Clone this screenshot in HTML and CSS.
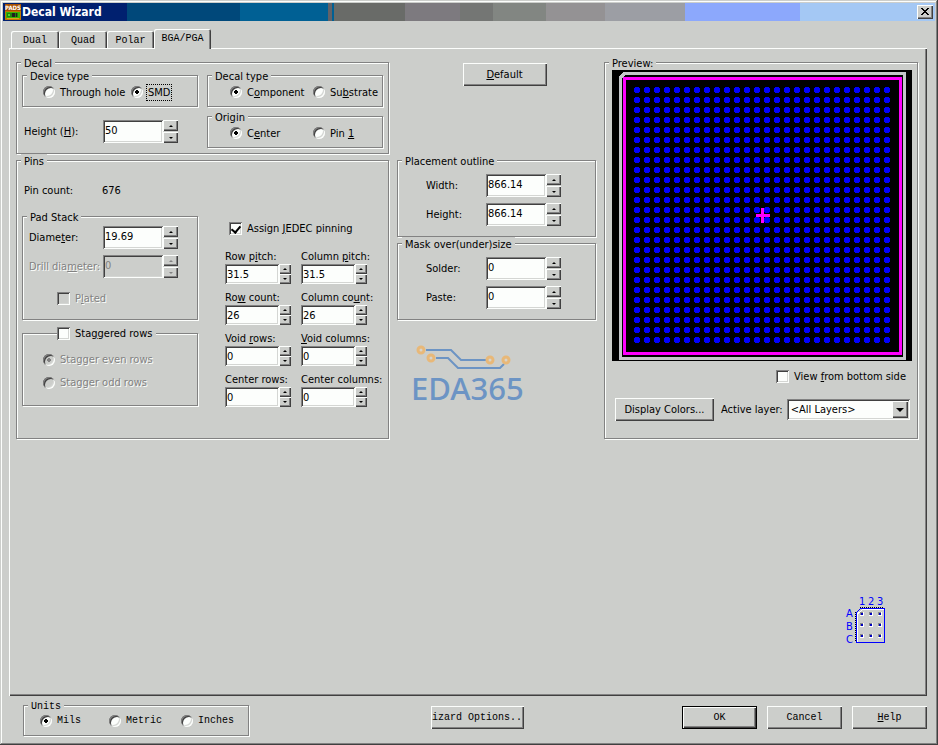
FILE: index.html
```html
<!DOCTYPE html>
<html lang="en">
<head>
<meta charset="utf-8">
<title>Decal Wizard</title>
<link rel="stylesheet" href="styles.css">
</head>
<body>
<main class="window">
  <header class="titlebar">
    <svg class="app-icon" width="16" height="16" viewBox="0 0 16 16" aria-hidden="true" shape-rendering="crispEdges">
      <rect width="16" height="16" fill="#c07800"/>
      <rect width="16" height="7" fill="#a85000"/>
      <text x="0" y="6" font-family="DejaVu Sans Condensed" font-size="6" font-weight="bold" fill="#fff">PADS</text>
      <rect x="1" y="8" width="14" height="6" fill="#38b800"/>
      <rect x="2" y="9" width="11" height="4" fill="#208010"/>
      <rect x="3" y="10" width="2" height="2" fill="#50e020"/>
      <rect x="7" y="9" width="3" height="4" fill="#202020"/>
      <rect x="11" y="9" width="1" height="4" fill="#202020"/>
      <rect x="2" y="14" width="12" height="1" fill="#e0a020"/>
    </svg>
    <h1 class="title">Decal Wizard</h1>
    <button class="close" type="button" aria-label="Close">
      <svg width="8" height="7" viewBox="0 0 8 7" aria-hidden="true" shape-rendering="crispEdges"><path d="M0 0h2v1h1v1h2v-1h1v-1h2v1h-1v1h-1v1h-1v1h1v1h1v1h1v1h-2v-1h-1v-1h-2v1h-1v1h-2v-1h1v-1h1v-1h1v-1h-1v-1h-1v-1h-1z"/></svg>
    </button>
  </header>

  <nav class="tabs" role="tablist">
    <button class="tab tab-dual" role="tab" type="button">Dual</button>
    <button class="tab tab-quad" role="tab" type="button">Quad</button>
    <button class="tab tab-polar" role="tab" type="button">Polar</button>
    <button class="tab tab-bga active" role="tab" type="button" aria-selected="true">BGA/PGA</button>
  </nav>

  <section class="page">
    <div class="columns">
      <fieldset class="group decal">
        <legend>Decal</legend>
        <fieldset class="group device">
          <legend>Device type</legend>
          <div class="radios wide">
            <label class="choice"><input type="radio" name="device"><span>Through hole</span></label>
            <label class="choice"><input type="radio" name="device" checked><span class="focused">SMD</span></label>
          </div>
        </fieldset>
        <fieldset class="group">
          <legend>Decal type</legend>
          <div class="radios">
            <label class="choice"><input type="radio" name="type" checked><span>C<u>o</u>mponent</span></label>
            <label class="choice"><input type="radio" name="type"><span>Su<u>b</u>strate</span></label>
          </div>
        </fieldset>
        <div class="field height-field">
          <label for="height">Height (<u>H</u>):</label>
          <span class="spin"><input id="height" type="text" value="50"><span class="arrows"><button type="button" class="up" aria-label="Increase"></button><button type="button" class="down" aria-label="Decrease"></button></span></span>
        </div>
        <fieldset class="group">
          <legend>Origin</legend>
          <div class="radios">
            <label class="choice"><input type="radio" name="origin" checked><span>C<u>e</u>nter</span></label>
            <label class="choice"><input type="radio" name="origin"><span>Pin <u>1</u></span></label>
          </div>
        </fieldset>
      </fieldset>

      <div class="default-cell"><button class="btn" type="button"><u>D</u>efault</button></div>

      <fieldset class="group pins">
        <legend>Pins</legend>
        <div class="pins-left">
          <div class="field pin-count"><span>Pin count:</span><output>676</output></div>
          <fieldset class="group pad-stack">
            <legend>Pad Stack</legend>
            <div class="field">
              <label for="diameter">Diame<u>t</u>er:</label>
              <span class="spin"><input id="diameter" type="text" value="19.69"><span class="arrows"><button type="button" class="up" aria-label="Increase"></button><button type="button" class="down" aria-label="Decrease"></button></span></span>
            </div>
            <div class="field disabled">
              <label for="drill">Drill dia<u>m</u>eter:</label>
              <span class="spin"><input id="drill" type="text" value="0" disabled><span class="arrows"><button type="button" class="up" aria-label="Increase" disabled></button><button type="button" class="down" aria-label="Decrease" disabled></button></span></span>
            </div>
            <label class="choice check plated disabled"><input type="checkbox" disabled><span>P<u>l</u>ated</span></label>
          </fieldset>
          <fieldset class="group staggered">
            <legend><label class="choice check"><input type="checkbox"><span>Sta<u>g</u>gered rows</span></label></legend>
            <label class="choice disabled"><input type="radio" name="stagger" checked disabled><span>Stagger even rows</span></label>
            <label class="choice disabled"><input type="radio" name="stagger" disabled><span>Stagger odd rows</span></label>
          </fieldset>
        </div>
        <div class="pins-right">
          <label class="choice check jedec"><input type="checkbox" checked><span>Assign <u>J</u>EDEC pinning</span></label>
          <div class="matrix">
            <div class="cell"><label for="rp">Row p<u>i</u>tch:</label><span class="spin small"><input id="rp" type="text" value="31.5"><span class="arrows"><button type="button" class="up" aria-label="Increase"></button><button type="button" class="down" aria-label="Decrease"></button></span></span></div>
            <div class="cell"><label for="cp">Column <u>p</u>itch:</label><span class="spin small"><input id="cp" type="text" value="31.5"><span class="arrows"><button type="button" class="up" aria-label="Increase"></button><button type="button" class="down" aria-label="Decrease"></button></span></span></div>
            <div class="cell"><label for="rc">Ro<u>w</u> count:</label><span class="spin small"><input id="rc" type="text" value="26"><span class="arrows"><button type="button" class="up" aria-label="Increase"></button><button type="button" class="down" aria-label="Decrease"></button></span></span></div>
            <div class="cell"><label for="cc">Column co<u>u</u>nt:</label><span class="spin small"><input id="cc" type="text" value="26"><span class="arrows"><button type="button" class="up" aria-label="Increase"></button><button type="button" class="down" aria-label="Decrease"></button></span></span></div>
            <div class="cell"><label for="vr">Void <u>r</u>ows:</label><span class="spin small"><input id="vr" type="text" value="0"><span class="arrows"><button type="button" class="up" aria-label="Increase"></button><button type="button" class="down" aria-label="Decrease"></button></span></span></div>
            <div class="cell"><label for="vc"><u>V</u>oid columns:</label><span class="spin small"><input id="vc" type="text" value="0"><span class="arrows"><button type="button" class="up" aria-label="Increase"></button><button type="button" class="down" aria-label="Decrease"></button></span></span></div>
            <div class="cell"><label for="nr">Center rows:</label><span class="spin small"><input id="nr" type="text" value="0"><span class="arrows"><button type="button" class="up" aria-label="Increase"></button><button type="button" class="down" aria-label="Decrease"></button></span></span></div>
            <div class="cell"><label for="nc">Center columns:</label><span class="spin small"><input id="nc" type="text" value="0"><span class="arrows"><button type="button" class="up" aria-label="Increase"></button><button type="button" class="down" aria-label="Decrease"></button></span></span></div>
          </div>
        </div>
      </fieldset>

      <div class="middle">
        <fieldset class="group">
          <legend>Placement outline</legend>
          <div class="sizes">
            <div class="field"><label for="pw">Width:</label><span class="spin"><input id="pw" type="text" value="866.14"><span class="arrows"><button type="button" class="up" aria-label="Increase"></button><button type="button" class="down" aria-label="Decrease"></button></span></span></div>
            <div class="field"><label for="ph">Height:</label><span class="spin"><input id="ph" type="text" value="866.14"><span class="arrows"><button type="button" class="up" aria-label="Increase"></button><button type="button" class="down" aria-label="Decrease"></button></span></span></div>
          </div>
        </fieldset>
        <fieldset class="group">
          <legend>Mask over(under)size</legend>
          <div class="sizes">
            <div class="field"><label for="ms">Solder:</label><span class="spin"><input id="ms" type="text" value="0"><span class="arrows"><button type="button" class="up" aria-label="Increase"></button><button type="button" class="down" aria-label="Decrease"></button></span></span></div>
            <div class="field"><label for="mp">Paste:</label><span class="spin"><input id="mp" type="text" value="0"><span class="arrows"><button type="button" class="up" aria-label="Increase"></button><button type="button" class="down" aria-label="Decrease"></button></span></span></div>
          </div>
        </fieldset>
        <div class="brand">
          <svg width="104" height="26" viewBox="0 0 104 26" fill="none" aria-hidden="true">
            <g stroke="#6c94c4" stroke-width="2">
              <path d="M15 5H40L50 15H76"/>
              <path d="M25 13H37L47 23H89L93 19"/>
            </g>
            <g stroke="#e8b878" stroke-width="3" fill="#d8d4cc">
              <circle cx="10" cy="5" r="3"/><circle cx="20" cy="13" r="3"/><circle cx="79" cy="15" r="3"/><circle cx="95" cy="15" r="3"/>
            </g>
          </svg>
          <span class="brand-name">EDA365</span>
        </div>
      </div>

      <fieldset class="group preview">
        <legend>Preview:</legend>
        <svg class="canvas" viewBox="0 0 300 291" shape-rendering="crispEdges" role="img" aria-label="Decal preview">
          <defs>
            <pattern id="pads" x="20" y="15" width="10" height="10" patternUnits="userSpaceOnUse">
              <path d="M3 2h4v1h1v4h-1v1h-4v-1h-1v-4h1z" fill="#0000fe"/>
            </pattern>
          </defs>
          <rect width="300" height="291" fill="#000"/>
          <path d="M8.500 288.500V7.500L12.500 3.500H292.500V288.500Z" fill="none" stroke="#c4c6ca" stroke-width="3"/>
          <rect x="12.500" y="8.500" width="276" height="275" fill="none" stroke="#fe00fe" stroke-width="3"/>
          <rect x="20" y="15" width="260" height="260" fill="url(#pads)"/>
          <path d="M144 144h14v3h-14zM149 138h3v15h-3z" fill="#fe00fe"/>
        </svg>
        <label class="choice check bottom-view"><input type="checkbox"><span>View <u>f</u>rom bottom side</span></label>
        <div class="layer-row">
          <button class="btn" type="button">Display Colors...</button>
          <label for="layer">Active layer:</label>
          <span class="combo">
            <select id="layer"><option>&lt;All Layers&gt;</option></select>
            <span class="combo-arrow" aria-hidden="true"></span>
          </span>
        </div>
      </fieldset>
    </div>

    <svg class="pin-order" width="42" height="52" viewBox="0 0 42 52" role="img" aria-label="Pin numbering order">
      <g class="pin-text">
        <text x="14" y="11">1</text><text x="23" y="11">2</text><text x="32" y="11">3</text>
        <text x="1" y="23">A</text><text x="1" y="36">B</text><text x="1" y="49">C</text>
      </g>
      <g shape-rendering="crispEdges">
        <path d="M12.500 48V20L17.500 15.500H39" fill="none" stroke="#fff"/>
        <path d="M11.500 48.500V18.500L15.500 14.500H39.500V48.500Z" fill="none" stroke="#0000fe"/>
        <path d="M10.500 47V18M15 13.500H39" fill="none" stroke="#000" stroke-dasharray="1 1"/>
        <path fill="#fff" d="M15 18h4v4h-4zM24 18h4v4h-4zM33 18h4v4h-4zM15 29h4v4h-4zM24 29h4v4h-4zM33 29h4v4h-4zM15 40h4v4h-4zM24 40h4v4h-4zM33 40h4v4h-4z"/>
        <path fill="#84868a" d="M15 18h3v3h-3zM24 18h3v3h-3zM33 18h3v3h-3zM15 29h3v3h-3zM24 29h3v3h-3zM33 29h3v3h-3zM15 40h3v3h-3zM24 40h3v3h-3zM33 40h3v3h-3z"/>
        <path fill="#0000c0" d="M16 19h2v2h-2zM25 19h2v2h-2zM34 19h2v2h-2zM16 30h2v2h-2zM25 30h2v2h-2zM34 30h2v2h-2zM16 41h2v2h-2zM25 41h2v2h-2zM34 41h2v2h-2z"/>
      </g>
    </svg>
  </section>

  <footer class="footer">
    <fieldset class="group units">
      <legend>Units</legend>
      <div class="unit-row">
        <label class="choice"><input type="radio" name="units" checked><span>Mils</span></label>
        <label class="choice"><input type="radio" name="units"><span>Metric</span></label>
        <label class="choice"><input type="radio" name="units"><span>Inches</span></label>
      </div>
    </fieldset>
    <button class="btn options" type="button">izard Options..</button>
    <div class="actions">
      <button class="btn ok" type="submit">OK</button>
      <button class="btn" type="button">Cancel</button>
      <button class="btn" type="button"><u>H</u>elp</button>
    </div>
  </footer>
</main>
</body>
</html>
```
FILE: styles.css
```css
:root {
  --face: #cccecb;
  --light: #fcfefc;
  --shade: #828282;
  --dark: #404040;
  --ui: "DejaVu Sans Condensed", "Noto Sans", sans-serif;
  --mono: "Liberation Mono", monospace;
  --raised: inset 1px 1px 0 var(--light), inset -1px -1px 0 var(--dark), inset -2px -2px 0 var(--shade);
  --sunken: inset 1px 1px 0 var(--shade), inset -1px -1px 0 var(--light), inset 2px 2px 0 var(--dark), inset -2px -2px 0 #d4d6d3;
}

* { box-sizing: border-box; }

body {
  margin: 0;
  background: var(--face);
  color: #000;
  font: 11px/13px var(--ui);
}

button, input, select { font: inherit; color: inherit; margin: 0; }
u { text-underline-offset: 1px; }

.window {
  display: flex;
  flex-direction: column;
  min-height: 100vh;
  padding: 3px;
  box-shadow: inset -1px -1px 0 var(--dark), inset 1px 1px 0 var(--face), inset -2px -2px 0 var(--shade), inset 2px 2px 0 var(--light);
}

.titlebar {
  display: flex;
  align-items: center;
  height: 18px;
  padding: 0 2px;
  background: linear-gradient(90deg,
    #00206f 0 124px, #00487a 124px 237px, #006094 237px 325px, #626268 325px 329px,
    #006094 329px 331px, #696b68 331px 402px, #7d7a7f 402px 457px, #747674 457px 490px,
    #828682 490px 543px, #949294 543px 602px, #9c9ea4 602px 682px, #8ca8fc 682px 797px, #a4c8f4 797px);
}
.title { margin: 0 auto 0 1px; font: bold 12px/16px var(--ui); color: #fff; }
.close {
  display: grid;
  place-items: center;
  width: 16px;
  height: 14px;
  padding: 0 1px 1px 0;
  border: 0;
  background: var(--face);
  box-shadow: var(--raised);
}

.tabs { display: flex; align-items: flex-end; height: 27px; padding-left: 8px; }
.tab {
  height: 17px;
  padding: 0;
  border: 0;
  border-radius: 2px 2px 0 0;
  background: var(--face);
  box-shadow: inset 1px 1px 0 var(--light), inset -1px 0 0 var(--dark), inset -2px 0 0 var(--shade);
  font: 10px/19px var(--mono);
}
.tab-dual { width: 48px; }
.tab-quad { width: 48px; }
.tab-polar { width: 47px; }
.tab-bga { width: 57px; }
.tab.active { z-index: 1; height: 20px; margin-bottom: -1px; padding-bottom: 2px; }

.page {
  display: flex;
  flex-direction: column;
  flex: 1;
  margin: 0 8px 0 6px;
  padding: 8px 9px 0 7px;
  box-shadow: var(--raised);
}
.columns {
  display: grid;
  grid-template-columns: 373fr 199fr 314fr;
  grid-template-areas: "decal default preview" "pins middle preview";
  column-gap: 8px;
}

.group {
  min-width: 0;
  margin: 0;
  padding: 0;
  border: 1px solid var(--shade);
  box-shadow: 1px 1px 0 var(--light), inset 1px 1px 0 var(--light);
}
.group > legend {
  height: 13px;
  margin-left: 4px;
  padding: 0 3px;
  background: var(--face);
  line-height: 15px;
  white-space: nowrap;
}

.choice { display: flex; align-items: center; gap: 5px; white-space: nowrap; }
.choice input {
  appearance: none;
  flex: none;
  width: 12px;
  height: 12px;
  border-radius: 50%;
  background: var(--light);
  box-shadow: var(--sunken);
}
.choice input[type="radio"]:checked { background: radial-gradient(circle, #000 0 2px, var(--light) 2px); }
.choice.check input { width: 13px; height: 13px; border-radius: 0; }
.choice.check input:checked { position: relative; }
.choice.check input:checked::after {
  content: "";
  position: absolute;
  left: 4px;
  top: 2px;
  width: 4px;
  height: 7px;
  border: solid #000;
  border-width: 0 2px 2px 0;
  transform: rotate(40deg);
}
.disabled { color: var(--shade); text-shadow: 1px 1px 0 var(--light); }
.choice.disabled input { background: var(--face); }
.choice.disabled input[type="radio"]:checked { background: radial-gradient(circle, var(--shade) 0 2px, var(--face) 2px); }
.focused { outline: 1px dotted #000; outline-offset: 1px; }

.radios { display: grid; grid-template-columns: 83px auto; align-items: center; justify-content: start; height: 24px; padding: 0 0 4px 22px; }
.radios.wide { grid-template-columns: 88px auto; padding-left: 20px; }

.field { display: flex; align-items: center; white-space: nowrap; }
.spin { display: flex; height: 23px; }
.spin input {
  width: 60px;
  padding: 0 3px 3px 2px;
  border: 0;
  background: var(--light);
  box-shadow: var(--sunken);
}
.spin input:disabled { background: var(--face); color: var(--shade); }
.arrows { display: flex; flex-direction: column; gap: 1px; width: 15px; }
.arrows button {
  display: grid;
  place-items: center;
  flex: 1;
  min-height: 0;
  padding: 0;
  border: 0;
  background: var(--face);
  box-shadow: var(--raised);
}
.arrows button::before { content: ""; border: 2px solid transparent; border-top: 0; border-bottom: 2px solid #000; }
.arrows .down::before { border-top: 2px solid #000; border-bottom: 0; }
.arrows .up:disabled::before { border-bottom-color: var(--shade); }
.arrows .down:disabled::before { border-top-color: var(--shade); }
.spin.small { height: 20px; }
.spin.small input { width: 54px; padding-bottom: 0; }
.spin.small .arrows { width: 12px; gap: 0; }

.btn {
  height: 23px;
  padding: 0 0 1px;
  border: 0;
  background: var(--face);
  box-shadow: var(--raised);
  white-space: nowrap;
}

.decal {
  grid-area: decal;
  display: grid;
  grid-template-columns: 176fr 176fr;
  column-gap: 9px;
  row-gap: 3px;
  padding: 0 5px 5px;
}
.decal > legend, .pins > legend { margin-left: -1px; }
.height-field { padding: 5px 0 0 2px; }
.height-field label { width: 79px; }

.default-cell { grid-area: default; display: grid; justify-items: center; align-content: start; padding-top: 7px; }
.default-cell .btn { width: 84px; margin-left: 16px; }

.pins {
  grid-area: pins;
  display: grid;
  grid-template-columns: 176px 1fr;
  gap: 27px;
  padding: 0 5px 31px;
}
.pin-count { height: 43px; padding: 3px 0 0 2px; }
.pin-count span { width: 78px; }
.pad-stack { padding: 3px 0 14px 6px; }
.pad-stack > legend { margin-left: -2px; }
.pad-stack .field { margin-bottom: 6px; }
.pad-stack label:not(.choice) { width: 74px; }
.plated { margin: 14px 0 0 28px; }
.staggered { margin-top: 7px; padding-bottom: 16px; }
.staggered > legend { margin-left: 34px; padding: 0 4px 0 0; line-height: 13px; }
.staggered > .choice { margin: 13px 0 0 20px; }
.staggered > .choice + .choice { margin-top: 10px; }

.pins-right { padding-top: 55px; }
.jedec { margin: 0 0 15px 4px; }
.matrix { display: grid; grid-template-columns: 76px 76px; row-gap: 7px; }
.cell { display: flex; flex-direction: column; gap: 1px; white-space: nowrap; }

.middle { grid-area: middle; }
.sizes { padding: 7px 0 10px 28px; }
.sizes .field + .field { margin-top: 6px; }
.sizes label { width: 60px; }
.brand { display: flex; flex-direction: column; width: 114px; margin: 25px 0 0 14px; color: #6c94c4; }
.brand-name { font: 500 31px/34px "Noto Sans", sans-serif; }

.preview { grid-area: preview; padding: 0 5px 0 7px; }
.preview > legend { margin-left: -3px; }
.canvas { display: block; width: 100%; margin-top: 1px; }
.bottom-view { justify-content: flex-end; margin: 9px 6px 0 0; }
.layer-row { display: flex; align-items: center; gap: 5px; margin: 15px 2px 0 3px; white-space: nowrap; }
.layer-row .btn { width: 99px; flex: none; }
.layer-row label { margin-left: 2px; }
.combo { position: relative; flex: 1; margin-left: -1px; }
.combo select {
  appearance: none;
  display: block;
  width: 100%;
  height: 21px;
  padding: 0 18px 0 4px;
  border: 0;
  border-radius: 0;
  background: var(--light);
  box-shadow: var(--sunken);
}
.combo-arrow {
  position: absolute;
  top: 2px;
  right: 2px;
  display: grid;
  place-items: center;
  width: 16px;
  height: 17px;
  background: var(--face);
  box-shadow: var(--raised);
  pointer-events: none;
}
.combo-arrow::before { content: ""; border: 4px solid transparent; border-top-color: #000; border-bottom: 0; }

.pin-order { align-self: flex-end; margin: auto 31px 50px 0; }
.pin-text { font: 11px var(--ui); fill: #0000fe; }

.footer {
  display: grid;
  grid-template-columns: 1fr auto 1fr;
  align-items: center;
  padding: 3px 8px 6px 20px;
  font: 10px/13px var(--mono);
}
.units { width: 226px; }
.unit-row { display: grid; grid-template-columns: 69px 72px auto; justify-content: start; height: 23px; padding: 2px 0 0 16px; }
.unit-row .choice { height: 13px; }
.options { width: 93px; margin-left: 4px; }
.actions { display: flex; justify-content: flex-end; gap: 10px; }
.actions .btn { width: 75px; }
.actions .ok { box-shadow: inset 0 0 0 1px #000, inset 2px 2px 0 var(--light), inset -2px -2px 0 var(--dark), inset -3px -3px 0 var(--shade); }
```
